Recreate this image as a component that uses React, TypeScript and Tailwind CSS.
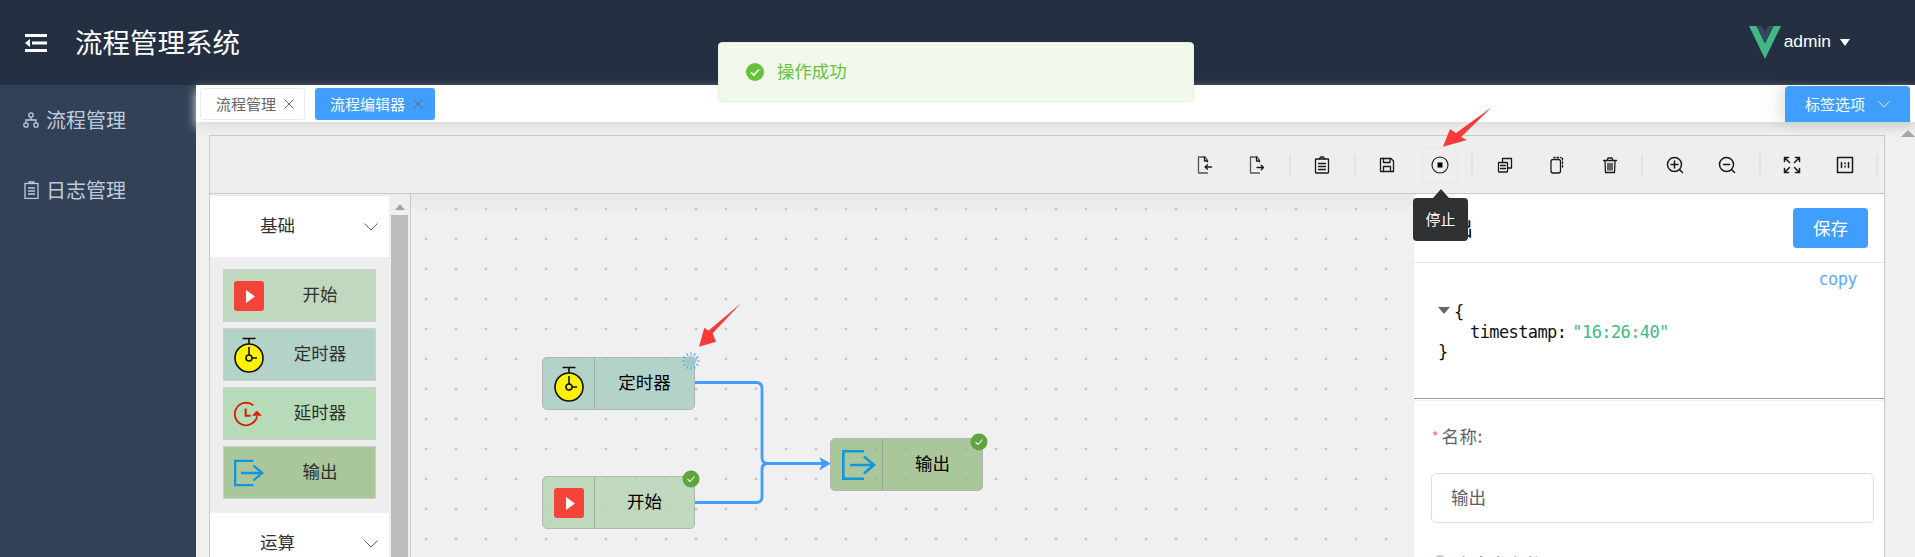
import React from "react";

const CJK = "[font-family:'Noto_Sans_CJK_SC','Liberation_Sans',sans-serif]";

function PlayIcon() {
  return (
    <svg width="30" height="30" viewBox="0 0 30 30">
      <rect width="30" height="30" rx="3" fill="#f44338" />
      <polygon points="12,9 21,15.500 12,22" fill="#fff" />
    </svg>
  );
}
function TimerIcon() {
  return (
    <svg width="30" height="36" viewBox="0 0 30 36" fill="none" stroke="#111" strokeWidth="1.600">
      <path d="M8.500 1.500H21.500M15 1.500V7" />
      <circle cx="15" cy="21" r="14" fill="#fff200" />
      <path d="M15 10V18M18 21H23" />
      <circle cx="15" cy="21" r="3" fill="#fff200" />
    </svg>
  );
}
function DelayIcon() {
  return (
    <svg width="36" height="30" viewBox="0 0 36 30" fill="none" stroke="#d81e06" strokeWidth="2.200">
      <path d="M27.800 17.500A13.500 13.500 0 1 1 23.200 4.700" />
      <path d="M14 8.500V17H20" strokeWidth="2.400" />
      <polygon points="27.500,11 33.500,17 21.500,17" fill="#d81e06" stroke="none" />
    </svg>
  );
}
function OutputIcon() {
  return (
    <svg width="34" height="30" viewBox="0 0 34 30" fill="none" stroke="#1296db" strokeWidth="2.600">
      <path d="M22 1.300H1.300V28.700H22" />
      <path d="M8 15H31M22 6.500L32 15L22 23.500" />
    </svg>
  );
}

function Ic({ children }: { children: React.ReactNode }) {
  return (
    <svg width="20" height="20" viewBox="0 0 20 20" fill="none" stroke="#1a1a1a" strokeWidth="1.300" strokeLinecap="round" strokeLinejoin="round">
      {children}
    </svg>
  );
}
const Sep = () => <div className="w-[2px] h-[21px] mx-[5.25px] bg-[#e2e2e2]" />;
function Tool({ children, active }: { children: React.ReactNode; active?: boolean }) {
  return (
    <div className="w-[52.5px] h-[36px] flex items-center justify-center">
      <div className={`w-[36px] h-[36px] flex items-center justify-center ${active ? "border border-[#e8e8e8] rounded-[2px]" : ""}`}>{children}</div>
    </div>
  );
}

function Toolbar() {
  return (
    <div className="h-[58px] border-b border-[#c9c9c9] bg-[#eeeeee] flex items-center justify-end pr-[0.75px]">
      <Tool><Ic><path d="M12.500 7V5.500L10 2H3.500V18H12.500" stroke="#555" /><path d="M9.500 2V6H12.500" /><path d="M16.500 12H10M12.500 9.800L10 12L12.500 14.200" /></Ic></Tool>
      <Tool><Ic><path d="M12.500 7V5.500L10 2H3.500V18H12.500" stroke="#555" /><path d="M9.500 2V6H12.500" /><path d="M10 12.500H16.500M14.300 10.300L16.500 12.500L14.300 14.700" /></Ic></Tool>
      <Sep />
      <Tool><Ic><rect x="3.500" y="4" width="13" height="14" rx="0.500" /><path d="M7.500 4L8.500 2H11.500L12.500 4M6.500 8.500H13.500M6.500 11.500H13.500M6.500 14.500H13.500" /></Ic></Tool>
      <Sep />
      <Tool><Ic><path d="M3.500 3.500H14L16.500 6V16.500H3.500Z" /><path d="M6.500 3.500V7.500H13V3.500M6.500 16.500V11.500H13.500V16.500" /></Ic></Tool>
      <Tool active><Ic><circle cx="10" cy="10" r="8" strokeWidth="1.100" /><rect x="7.500" y="7.500" width="5" height="5" fill="#000" stroke="none" /></Ic></Tool>
      <Sep />
      <Tool><Ic><rect x="3.500" y="7.500" width="9" height="9.500" rx="0.500" /><path d="M7.500 7.500V3.500H16.500V13H12.500M5.500 10.500H10.500M5.500 13.500H10.500" /></Ic></Tool>
      <Tool><Ic><rect x="4" y="4.500" width="9.500" height="13.500" rx="2" /><path d="M7 2.500H8M10 2.500H11.500M13.500 2.500L15.500 3.500V5M15.500 7V8.500M15.500 10.500V12" /></Ic></Tool>
      <Tool><Ic><path d="M3.500 5.500H16.500M7 5.500L8 3H12L13 5.500M5 5.500L5.500 17.500H14.500L15 5.500M8 8.500V15M10 8.500V15M12 8.500V15" /></Ic></Tool>
      <Sep />
      <Tool><Ic><circle cx="9.500" cy="9.500" r="7" strokeWidth="1.500" /><path d="M14.500 14.500L17.500 17.500M9.500 6V13M6 9.500H13" strokeWidth="1.500" /></Ic></Tool>
      <Tool><Ic><circle cx="9.500" cy="9.500" r="7" strokeWidth="1.500" /><path d="M14.500 14.500L17.500 17.500M6.500 9.500H12.500" strokeWidth="1.500" /></Ic></Tool>
      <Sep />
      <Tool><Ic><path d="M7.500 7.500L2.500 2.500M2.500 6.500V2.500H6.500M12.500 7.500L17.500 2.500M13.500 2.500H17.500V6.500M7.500 12.500L2.500 17.500M2.500 13.500V17.500H6.500M12.500 12.500L17.500 17.500M17.500 13.500V17.500H13.500" strokeWidth="1.500" /></Ic></Tool>
      <Tool><Ic><rect x="2.500" y="2.500" width="15" height="15" strokeWidth="1.500" /><path d="M6.500 7.500V12.500M13.500 7.500V12.500M10 8V8.800M10 11.200V12" strokeWidth="1.500" /></Ic></Tool>
      <Sep />
    </div>
  );
}

function Chevron() {
  return (
    <svg width="14" height="8" viewBox="0 0 14 8" fill="none" stroke="#606266" strokeWidth="1">
      <path d="M0.500 0.500L7 7L13.500 0.500" />
    </svg>
  );
}

function PaletteItem({ label, color, icon }: { label: string; color: string; icon: React.ReactNode }) {
  return (
    <div className="h-[53px] border border-[#cfcfcf] flex items-center pl-[10px] relative" style={{ backgroundColor: color }}>
      <div className="w-[30px] flex justify-start">{icon}</div>
      <div className="absolute inset-y-0 left-[41px] right-0 pb-[2px] flex items-center justify-center text-[17.5px] text-[#303133]">{label}</div>
    </div>
  );
}

function Palette() {
  return (
    <div className="w-[201px] shrink-0 border-r border-[#cccccc] bg-[#eeeeee] flex pt-[2px] overflow-hidden">
      <div className="w-[179px] shrink-0">
        <div className="h-[61px] bg-white relative flex items-center pl-[50px] pb-[2px] text-[17.5px] text-[#303133]">
          基础
          <span className="absolute left-[154px] top-[27px] flex"><Chevron /></span>
        </div>
        <div className="h-[256px] px-[13px] pt-[12px] flex flex-col gap-[6px]">
          <PaletteItem label="开始" color="#c0d8bd" icon={<PlayIcon />} />
          <PaletteItem label="定时器" color="#b3d2c8" icon={<TimerIcon />} />
          <PaletteItem label="延时器" color="#b7dab8" icon={<DelayIcon />} />
          <PaletteItem label="输出" color="#a9c79b" icon={<OutputIcon />} />
        </div>
        <div className="h-[61px] bg-white relative flex items-center pl-[50px] pb-[2px] text-[17.5px] text-[#303133]">
          运算
          <span className="absolute left-[154px] top-[27px] flex"><Chevron /></span>
        </div>
      </div>
      <div className="w-[17px] ml-[2px] shrink-0 flex flex-col items-center">
        <div className="h-[19px] w-full flex items-center justify-center pt-[2px]">
          <div className="border-x-[5px] border-b-[6px] border-x-transparent border-b-[#a3a3a3]" />
        </div>
        <div className="flex-1 w-full bg-[#bdbdbd]" />
      </div>
    </div>
  );
}

function Check({ style }: { style: React.CSSProperties }) {
  return (
    <svg className="absolute z-10" style={style} width="18" height="18" viewBox="0 0 18 18">
      <circle cx="9" cy="9" r="8.500" fill="#5ea53f" />
      <path d="M5.500 9.200L8 11.500L12.500 6.500" fill="none" stroke="#fff" strokeWidth="1.100" />
    </svg>
  );
}

function Spinner({ style }: { style: React.CSSProperties }) {
  const n = 12;
  return (
    <svg className="absolute z-10" style={style} width="18" height="18" viewBox="0 0 18 18">
      <circle cx="9" cy="9" r="5" fill="#a3c6cf" />
      {Array.from({ length: n }).map((_, i) => {
        const a = (i * 2 * Math.PI) / n;
        return (
          <line key={i} x1={9 + 5.8 * Math.cos(a)} y1={9 + 5.8 * Math.sin(a)} x2={9 + 8.8 * Math.cos(a)} y2={9 + 8.8 * Math.sin(a)} stroke="#55aede" strokeWidth="1.100" />
        );
      })}
    </svg>
  );
}

function Node({ x, y, label, color, icon }: { x: number; y: number; label: string; color: string; icon: React.ReactNode }) {
  return (
    <div className="absolute w-[153px] h-[53px] border border-[#b5b5b5] rounded-[5px] flex items-center" style={{ left: x, top: y, backgroundColor: color }}>
      <div className="w-[52px] h-full border-r border-[rgba(130,130,130,0.45)] shrink-0 flex items-center pl-[11px]">{icon}</div>
      <div className="flex-1 text-center pb-[2px] text-[17.5px] text-black">{label}</div>
    </div>
  );
}

function Canvas() {
  return (
    <div className="w-[1003px] shrink-0 bg-[linear-gradient(180deg,#e7e8ea_0px,#f0f0f0_22px)]">
      <div className="relative h-full bg-[radial-gradient(circle,#c6c6c6_1.2px,transparent_1.7px)] bg-[length:30px_30px]">
        <svg className="absolute left-0 top-0" width="1003" height="363" fill="none">
          <path d="M284 188.500H345Q351 188.500 351 194.500V263.500Q351 269.500 357 269.500H412" stroke="#409eff" strokeWidth="2.800" />
          <path d="M284 308.500H345Q351 308.500 351 302.500V275.500Q351 269.500 357 269.500" stroke="#409eff" strokeWidth="2.800" />
          <path d="M409 264L419 269.500L409 275.500L412 269.500Z" fill="#409eff" stroke="#409eff" />
        </svg>
        <Node x={131} y={163} label="定时器" color="rgba(164,202,190,0.8)" icon={<TimerIcon />} />
        <Node x={131} y={282} label="开始" color="rgba(180,210,176,0.8)" icon={<PlayIcon />} />
        <Node x={419} y={244} label="输出" color="rgba(152,189,134,0.8)" icon={<OutputIcon />} />
        <Spinner style={{ left: 271, top: 158 }} />
        <Check style={{ left: 271, top: 276 }} />
        <Check style={{ left: 559, top: 239 }} />
      </div>
    </div>
  );
}

function RightPanel() {
  return (
    <div className="flex-1 bg-white flex flex-col overflow-hidden">
      <div className="h-[69px] shrink-0 border-b border-[#dfe6ec] flex items-center justify-between pl-[19px] pr-[16px]">
        <span className="text-[20px] text-black">输出</span>
        <button className="w-[75px] h-[40px] rounded-[4px] bg-[#409eff] text-white text-[17.500px]">保存</button>
      </div>
      <div className="h-[135px] shrink-0 relative [font-family:'DejaVu_Sans_Mono',monospace] text-[17px] tracking-[-0.6px]">
        <div className="flex justify-end pr-[27px] pt-[6px] text-[#5aadff] leading-[20px]">copy</div>
        <div className="pl-[24px] pt-[13px] leading-[20px] text-[#111]">
          <div className="flex items-center">
            <span className="border-x-[6.500px] border-t-[7px] border-x-transparent border-t-[#666] mr-[4px] -mt-[4px]" />
            <span>{"{"}</span>
          </div>
          <div className="pl-[32px]">
            timestamp:<span className="text-[#42b983] ml-[6px]">"16:26:40"</span>
          </div>
          <div>{"}"}</div>
        </div>
      </div>
      <div className="h-[1px] shrink-0 bg-[#9a9a9a]" />
      <div className="h-[1px] mt-[1px] shrink-0 bg-[#eeeeee]" />
      <div className="px-[17px] pt-[23px] shrink-0">
        <div className="flex items-center h-[24px] pl-[1px] text-[17.500px] text-[#606266]">
          <span className="text-[#f56c6c] text-[14px] mr-[3px]">*</span>
          <span className="tracking-[0.5px]">名称:</span>
        </div>
        <div className="mt-[25px] mr-[-7px] h-[50px] border border-[#dcdfe6] rounded-[5px] flex items-center pl-[19px] pb-[1px] text-[17.500px] text-[#606266]">输出</div>
        <div className="mt-[29px] flex items-start pl-[3px] text-[17.500px] text-[#606266] leading-[24px]">
          <span className="w-[12px] h-[12px] rounded-full bg-[#c0c4cc] mr-[9px] mt-[3px] shrink-0" />
          <span>自定义参数</span>
        </div>
      </div>
    </div>
  );
}

function RedArrow({ left, top, w, h, points }: { left: number; top: number; w: number; h: number; points: string }) {
  return (
    <svg className="absolute z-40" style={{ left, top }} width={w} height={h}>
      <polygon points={points} fill="#f93a3a" />
    </svg>
  );
}

export default function App() {
  return (
    <div className={`relative w-[1915px] h-[557px] overflow-hidden bg-[#f0f0f0] ${CJK}`}>
      <header className="h-[85px] bg-[#242f42] flex items-center relative">
        <svg className="ml-[25px]" width="22" height="18" viewBox="0 0 22 18" fill="#fff">
          <rect x="0" y="0" width="22" height="3" />
          <rect x="7" y="7.500" width="15" height="3" />
          <rect x="0" y="15" width="22" height="3" />
          <polygon points="0,9 5,5 5,13" />
        </svg>
        <div className="ml-[28px] pb-[2px] text-[27.500px] text-white">流程管理系统</div>
        <div className="ml-auto flex items-center pr-[65px]">
          <svg width="32" height="33" viewBox="0 0 32 33">
            <polygon points="0,0 16,33 32,0 24.500,0 16,17.500 7.500,0" fill="#41b883" />
            <polygon points="7.500,0 16,17.500 24.500,0 19,0 16,6 13,0" fill="#34495e" />
          </svg>
          <span className="ml-[3px] pb-[2px] text-[17.400px] text-white [font-family:'Liberation_Sans',sans-serif]">admin</span>
          <span className="ml-[9px] border-x-[5.500px] border-t-[7px] border-x-transparent border-t-white" />
        </div>
      </header>

      <div className="flex h-[472px]">
        <aside className="w-[196px] shrink-0 bg-[#324157] text-[#bfcbd9] text-[20px]">
          <div className="h-[70px] flex items-center pl-[23px]">
            <svg className="mr-[7px]" width="16" height="16" viewBox="0 0 16 16" fill="none" stroke="#bfcbd9" strokeWidth="1.300">
              <circle cx="8" cy="3" r="2.200" />
              <circle cx="3" cy="13" r="2.200" />
              <circle cx="13" cy="13" r="2.200" />
              <path d="M8 5.200V8M3 10.800V8H13V10.800" />
            </svg>
            流程管理
          </div>
          <div className="h-[70px] flex items-center pl-[24px]">
            <svg className="mr-[7px]" width="15" height="18" viewBox="0 0 15 18" fill="none" stroke="#bfcbd9" strokeWidth="1.300">
              <rect x="1" y="2.500" width="13" height="15" />
              <path d="M5 2.500V1H10V2.500M4 7H11M4 10H11M4 13H11" />
            </svg>
            日志管理
          </div>
        </aside>

        <main className="flex-1 min-w-0 flex flex-col">
          <div className="h-[37px] shrink-0 bg-white relative z-10 flex justify-between shadow-[0_5px_10px_#dddddd]">
            <div className="flex pl-[4px] pt-[3px] gap-[10px] text-[15px]">
              <div className="w-[105px] h-[32px] border border-[#e9eaec] rounded-[3px] flex items-center pl-[15px] text-[#666]">
                流程管理
                <svg className="ml-[8px]" width="10" height="10" viewBox="0 0 10 10" stroke="#666" strokeWidth="1"><path d="M0.500 0.500L9.500 9.500M9.500 0.500L0.500 9.500" /></svg>
              </div>
              <div className="w-[120px] h-[32px] rounded-[3px] bg-[#409eff] flex items-center pl-[15px] text-white">
                流程编辑器
                <svg className="ml-[8px]" width="10" height="10" viewBox="0 0 10 10" stroke="#5c6d80" strokeWidth="1"><path d="M0.500 0.500L9.500 9.500M9.500 0.500L0.500 9.500" /></svg>
              </div>
            </div>
            <div className="w-[130px] bg-white pt-[1px] shadow-[-3px_0_15px_3px_rgba(0,0,0,0.1)]">
              <div className="w-[125px] h-[36px] rounded-t-[4px] bg-[#409eff] text-white text-[15px] flex items-center pl-[20px]">
                标签选项
                <svg className="ml-[13px]" width="12" height="7" viewBox="0 0 12 7" fill="none" stroke="#fff" strokeWidth="1"><path d="M0.500 0.500L6 6L11.500 0.500" /></svg>
              </div>
            </div>
          </div>

          <div className="flex-1 min-h-0 flex">
            <div className="w-[1705px] shrink-0 pl-[13px] pt-[13px] pr-[16px]">
              <div className="h-[500px] border border-[#c9c9c9]">
                <Toolbar />
                <div className="flex h-[363px]">
                  <Palette />
                  <Canvas />
                  <RightPanel />
                </div>
              </div>
            </div>
            <div className="flex-1 flex justify-center pt-[8px]">
              <div className="border-x-[7px] border-b-[7px] border-x-transparent border-b-[#a3a3a3] h-0" />
            </div>
          </div>
        </main>
      </div>

      <div className="absolute z-50 left-[718px] top-[42px] w-[476px] h-[60px] bg-[#f0f9eb] border border-[#e1f3d8] rounded-[4px] flex items-center pl-[27px] pb-[1px] text-[17.400px] text-[#67c23a]">
        <svg className="mr-[13px]" width="18" height="18" viewBox="0 0 18 18">
          <circle cx="9" cy="9" r="9" fill="#67c23a" />
          <path d="M5 9.300L8 12L13 6.500" fill="none" stroke="#fff" strokeWidth="1.600" />
        </svg>
        操作成功
      </div>

      <RedArrow left={1440} top={105} w={56} h={44} points="52,2 21,32 27,35 3,41.700 10,24 16,28" />
      <RedArrow left={695} top={300} w={50} h={50} points="46,3.300 17.700,33.300 21,41.700 4,46.700 9.300,27.700 13.300,30.700" />

      <div className="absolute z-50 left-[1413px] top-[189px] flex flex-col items-center">
        <div className="border-x-[8px] border-b-[9px] border-x-transparent border-b-[#303133]" />
        <div className="w-[55px] h-[43px] rounded-[4px] bg-[#303133] text-white text-[15px] flex items-center justify-center">停止</div>
      </div>
    </div>
  );
}
